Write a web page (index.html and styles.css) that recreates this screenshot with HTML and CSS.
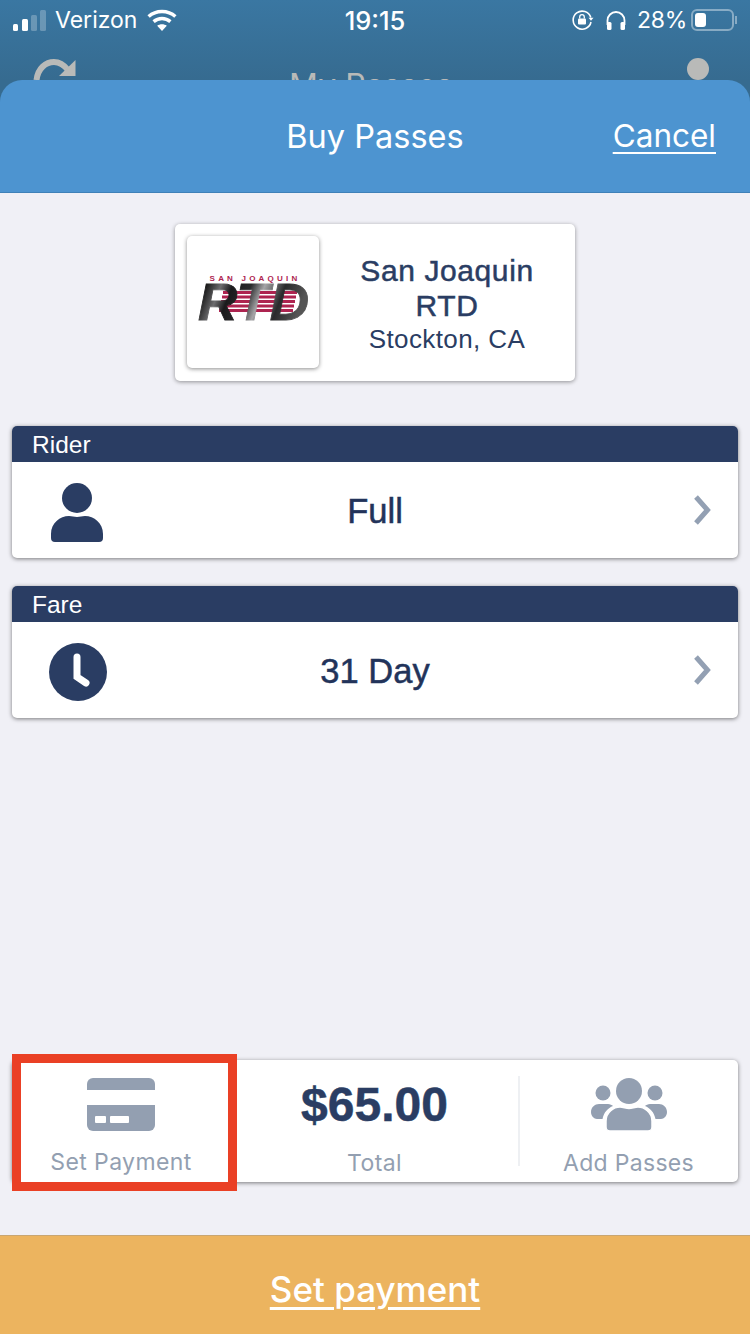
FILE: index.html
```html
<!DOCTYPE html>
<html lang="en">
<head>
  <meta charset="UTF-8">
  <meta name="viewport" content="width=device-width, initial-scale=1.0">
  <title>Buy Passes</title>
  <link rel="stylesheet" href="styles.css">
</head>
<body>
  <div class="backdrop">
    <div class="status-bar">
      <div class="status-left">
        <svg class="signal" width="33" height="21" viewBox="0 0 33 21" fill="#fff">
          <rect x="0" y="14" width="5" height="7" rx="1.5"/>
          <rect x="9" y="9" width="6" height="12" rx="1.5"/>
          <rect x="18" y="5" width="6" height="16" rx="1.5" opacity=".25"/>
          <rect x="27" y="0" width="6" height="21" rx="1.5" opacity=".25"/>
        </svg>
        <span class="carrier">Verizon</span>
        <svg class="wifi" width="30" height="22" viewBox="0 0 30 22" fill="none" stroke="#fff" stroke-width="3.4">
          <path d="M1.6 7.6C9 .8 21 .8 28.4 7.6"/>
          <path d="M6.6 12.6C11.4 8.4 18.6 8.4 23.4 12.6"/>
          <path d="M15 22l-4.8-5.2c2.700-2 6.900-2 9.600 0z" fill="#fff" stroke="none"/>
        </svg>
      </div>
      <span class="clock">19:15</span>
      <div class="status-right">
        <svg width="22" height="20" viewBox="0 0 22 20" fill="none" stroke="#fff" stroke-width="1.6">
          <path d="M18.800 7.500A9 9 0 1 0 19 12"/>
          <path d="M21.500 7.800h-5l2.500 3z" fill="#fff" stroke="none"/>
          <rect x="6" y="8.500" width="8" height="6" rx="1" fill="#fff" stroke="none"/>
          <path d="M7.700 8.500V7a2.300 2.300 0 0 1 4.600 0v1.500" stroke-width="1.300"/>
        </svg>
        <svg class="phones" width="20" height="19" viewBox="0 0 20 19" fill="none" stroke="#fff" stroke-width="1.800">
          <path d="M1.500 14V9.500a8.500 8.500 0 0 1 17 0V14"/>
          <rect x="1" y="11" width="4.500" height="8" rx="1.500" fill="#fff" stroke="none"/>
          <rect x="14.500" y="11" width="4.500" height="8" rx="1.500" fill="#fff" stroke="none"/>
        </svg>
        <span class="percent">28%</span>
        <div class="battery"><div class="battery-fill"></div></div>
        <div class="battery-nub"></div>
      </div>
    </div>
    <div class="behind-nav">
      <svg width="44" height="22" viewBox="0 0 44 22" fill="none">
        <path d="M3.500 22C5 10 13 4 21 4c6 0 10 3 14 8" stroke="#b9bab8" stroke-width="6"/>
        <path d="M42.500 2v16H26z" fill="#b9bab8"/>
      </svg>
      <span class="behind-title">My Passes</span>
      <div class="behind-dot"></div>
    </div>
  </div>

  <div class="sheet">
    <header class="sheet-header">
      <h1>Buy Passes</h1>
      <a class="cancel" href="#">Cancel</a>
    </header>

    <main class="sheet-body">
      <div class="agency">
        <div class="agency-logo">
          <svg width="132" height="132" viewBox="0 0 132 132">
            <defs>
              <linearGradient id="chrome" x1="0" y1="0" x2="1" y2="0.2">
                <stop offset="0" stop-color="#777"/>
                <stop offset=".1" stop-color="#111"/>
                <stop offset=".24" stop-color="#6d6d6f"/>
                <stop offset=".34" stop-color="#1a1a1c"/>
                <stop offset=".5" stop-color="#2a2a2c"/>
                <stop offset=".62" stop-color="#a5a5a7"/>
                <stop offset=".8" stop-color="#2a2a2c"/>
                <stop offset="1" stop-color="#555"/>
              </linearGradient>
            </defs>
            <text class="logo-small" x="68" y="44.500" text-anchor="middle">SAN JOAQUIN</text>
            <g fill="#ad2450">
              <rect x="36" y="55" width="74" height="3"/>
              <rect x="35" y="59.500" width="74" height="3"/>
              <rect x="34" y="64" width="74" height="3"/>
              <rect x="33" y="68.500" width="74" height="3"/>
              <rect x="32" y="73" width="74" height="3"/>
            </g>
            <text class="logo-big" x="11" y="83.500" textLength="111" lengthAdjust="spacingAndGlyphs" fill="url(#chrome)" stroke="url(#chrome)">RTD</text>
          </svg>
        </div>
        <div class="agency-info">
          <div class="agency-name">San Joaquin RTD</div>
          <div class="agency-city">Stockton, CA</div>
        </div>
      </div>

      <section class="picker">
        <div class="picker-label">Rider</div>
        <div class="picker-row">
          <svg class="picker-icon" width="58" height="60" viewBox="0 0 58 60" fill="#2a3d63">
            <circle cx="29" cy="16" r="15"/>
            <path d="M3 56V52C3 41 12 34 21 34c3 0 5 1 8 1s5-1 8-1c9 0 18 7 18 18v4a4 4 0 0 1-4 4H7a4 4 0 0 1-4-4z"/>
          </svg>
          <div class="picker-value">Full</div>
          <svg class="chevron" width="18" height="32" viewBox="0 0 18 32" fill="none">
            <path d="M3 3L14.500 16 3 29" stroke="#93a0b3" stroke-width="5"/>
          </svg>
        </div>
      </section>

      <section class="picker">
        <div class="picker-label">Fare</div>
        <div class="picker-row">
          <svg class="picker-icon picker-icon-clock" width="58" height="58" viewBox="0 0 58 58">
            <circle cx="29" cy="29" r="29" fill="#2a3d63"/>
            <path d="M28 14v20l9 6" fill="none" stroke="#fff" stroke-width="7" stroke-linecap="round"/>
          </svg>
          <div class="picker-value">31 Day</div>
          <svg class="chevron" width="18" height="32" viewBox="0 0 18 32" fill="none">
            <path d="M3 3L14.500 16 3 29" stroke="#93a0b3" stroke-width="5"/>
          </svg>
        </div>
      </section>

      <div class="summary">
        <div class="summary-cell">
          <svg width="68" height="53" viewBox="0 0 68 53" fill="#939fb1">
            <path d="M0 12V6a6 6 0 0 1 6-6h56a6 6 0 0 1 6 6v6z"/>
            <path d="M0 27h68v20a6 6 0 0 1-6 6H6a6 6 0 0 1-6-6z"/>
            <rect x="8" y="38" width="11" height="7" rx="1" fill="#fff"/>
            <rect x="23" y="38" width="19" height="7" rx="1" fill="#fff"/>
          </svg>
          <div class="summary-label">Set Payment</div>
        </div>
        <div class="summary-cell summary-total">
          <div class="total-amount">$65.00</div>
          <div class="summary-label">Total</div>
        </div>
        <div class="summary-cell summary-add">
          <svg width="76" height="53" viewBox="0 0 76 53" fill="#939fb1">
            <circle cx="38" cy="13" r="13"/>
            <circle cx="12" cy="15" r="7.500"/>
            <circle cx="64" cy="15" r="7.500"/>
            <path d="M0 34c0-5 4-8 8-8h9c2 0 4 1 5 2-5 2-9 6-10.500 13H6c-3 0-6-3-6-7z"/>
            <path d="M76 34c0-5-4-8-8-8h-9c-2 0-4 1-5 2 5 2 9 6 10.500 13H70c3 0 6-3 6-7z"/>
            <path d="M15 49V43c0-9 8-14 14-14 3 0 6 1.500 9 1.500s6-1.500 9-1.500c6 0 14 5 14 14v6a4 4 0 0 1-4 4H19a4 4 0 0 1-4-4z" stroke="#fff" stroke-width="1.500"/>
          </svg>
          <div class="summary-label">Add Passes</div>
        </div>
        <div class="highlight"></div>
      </div>
    </main>

    <a class="action" href="#">Set payment</a>
  </div>
</body>
</html>
```

FILE: styles.css
```css
* {
  box-sizing: border-box;
}

html,
body {
  margin: 0;
  height: 1334px;
}

body {
  background-color: #f0f0f6;
  color: #2a3d63;
  font-family: Inter, "Liberation Sans", sans-serif;
  overflow: hidden;
}

/* dimmed page behind the sheet */
.backdrop {
  height: 80px;
  overflow: hidden;
  background: linear-gradient(#3a77a2, #366b90);
  color: #fff;
}

.status-bar {
  position: relative;
  display: flex;
  justify-content: space-between;
  align-items: center;
  height: 40px;
  padding: 0 13px;
}

.status-left,
.status-right {
  display: flex;
  align-items: center;
}

.carrier {
  margin-left: 9px;
  font-size: 23px;
}

.wifi {
  margin-left: 10px;
}

.clock {
  position: absolute;
  left: 0;
  right: 0;
  text-align: center;
  font-size: 25.500px;
  font-weight: 500;
}

.phones {
  margin-left: 12px;
}

.percent {
  margin-left: 11px;
  font-size: 23px;
  letter-spacing: -0.3px;
}

.battery {
  width: 43px;
  height: 22px;
  margin-left: 4px;
  padding: 2px;
  border: 2px solid rgba(255, 255, 255, 0.4);
  border-radius: 6px;
}

.battery-fill {
  width: 11px;
  height: 100%;
  background: #fff;
  border-radius: 3px;
}

.battery-nub {
  width: 2px;
  height: 8px;
  margin-left: 1px;
  background: rgba(255, 255, 255, 0.4);
}

.behind-nav {
  display: grid;
  grid-template-columns: 1fr auto 1fr;
  padding: 18px 41px 0 33px;
}

.behind-title {
  font-size: 32px;
  line-height: 38px;
  margin-top: 9px;
  color: #b9bab8;
}

.behind-dot {
  justify-self: end;
  width: 22px;
  height: 22px;
  border-radius: 50%;
  background: #b9bab8;
}

.sheet {
  height: 1254px;
  display: flex;
  flex-direction: column;
  background: #366b90;
}

.sheet-header {
  position: relative;
  height: 113px;
  display: flex;
  align-items: center;
  justify-content: center;
  background-color: #4d94d0;
  border-bottom: 1px solid #3f81b8;
  border-radius: 22px 22px 0 0;
  color: #fff;
}

.sheet-header h1 {
  margin: 0;
  font-size: 32.500px;
  font-weight: 400;
}

.cancel {
  position: absolute;
  right: 34px;
  top: 36px;
  font-size: 31.500px;
  color: #fff;
  text-decoration-thickness: 2px;
  text-underline-offset: 5px;
}

.sheet-body {
  flex: 1;
  display: flex;
  flex-direction: column;
  padding: 31px 12px 53px;
  background: #f0f0f6;
}

.agency {
  display: flex;
  align-self: center;
  width: 400px;
  height: 157px;
  padding: 12px;
  margin-bottom: 45px;
  background: #fff;
  border-radius: 5px;
  box-shadow: 0 1px 4px rgba(0, 0, 0, 0.4);
}

.agency-logo {
  width: 132px;
  height: 132px;
  background: #fff;
  border-radius: 5px;
  box-shadow: 0 1px 4px rgba(0, 0, 0, 0.45);
}

.logo-small {
  font-family: "Liberation Sans", sans-serif;
  font-size: 8px;
  font-weight: 700;
  letter-spacing: 3.200px;
  fill: #ad2450;
}

.logo-big {
  font-family: "Liberation Sans", sans-serif;
  font-size: 51px;
  font-weight: 700;
  font-style: italic;
  stroke-width: 0.8px;
}

.agency-info {
  flex: 1;
  padding-left: 12px;
  padding-top: 17px;
  text-align: center;
  font-family: "Liberation Sans", sans-serif;
}

.agency-name {
  font-size: 30px;
  line-height: 35px;
  letter-spacing: 0.6px;
  -webkit-text-stroke: 0.5px #2a3d63;
}

.agency-city {
  font-size: 26px;
  line-height: 33px;
  letter-spacing: 0.4px;
}

.picker {
  height: 132px;
  margin-bottom: 28px;
  background: #fff;
  border-radius: 5px;
  overflow: hidden;
  box-shadow: 0 1px 4px rgba(0, 0, 0, 0.5);
}

.picker-label {
  height: 36px;
  padding-left: 20px;
  background: #2a3d63;
  color: #fff;
  font-family: "Liberation Sans", sans-serif;
  font-size: 24.500px;
  line-height: 37px;
}

.picker-row {
  position: relative;
  height: 96px;
  display: flex;
  align-items: center;
  justify-content: center;
}

.picker-icon {
  position: absolute;
  left: 36px;
  top: 20px;
}

.picker-icon-clock {
  left: 37px;
  top: 21px;
}

.picker-value {
  padding-top: 3px;
  font-family: "Liberation Sans", sans-serif;
  font-size: 34.500px;
  color: #22335a;
  -webkit-text-stroke: 0.5px #22335a;
}

.chevron {
  position: absolute;
  right: 27px;
  top: 32px;
}

.summary {
  position: relative;
  display: grid;
  grid-template-columns: 218px 1fr 219px;
  height: 122px;
  margin-top: auto;
  background: #fff;
  border-radius: 5px;
  box-shadow: 0 1px 4px rgba(0, 0, 0, 0.5);
}

.summary-cell {
  display: flex;
  flex-direction: column;
  align-items: center;
  padding-top: 18px;
}

.summary-label {
  margin-top: 17px;
  font-size: 23px;
  line-height: 28px;
  letter-spacing: 0.4px;
  color: #939fb1;
}

.summary-total {
  padding-top: 12px;
}

.total-amount {
  font-family: "Liberation Sans", sans-serif;
  font-size: 48px;
  font-weight: 700;
  line-height: 66px;
  margin-bottom: -6px;
  -webkit-text-stroke: 0.5px #2a3d63;
}

.summary-add {
  position: relative;
}

.summary-add .summary-label {
  margin-top: 18px;
  letter-spacing: 0.3px;
}

.summary-add::before {
  content: "";
  position: absolute;
  left: -1px;
  top: 16px;
  bottom: 16px;
  width: 2px;
  background: #eef0f3;
}

/* red annotation box from the screenshot */
.highlight {
  position: absolute;
  left: 0;
  top: -6px;
  width: 225px;
  height: 137px;
  border: 9px solid #ea4025;
}

.action {
  height: 99px;
  padding-top: 8px;
  display: flex;
  align-items: center;
  justify-content: center;
  background: #ecb45f;
  border-top: 1px solid #c9a672;
  color: #fff;
  font-size: 35px;
  font-weight: 500;
  text-decoration-thickness: 3px;
  text-underline-offset: 5px;
}
```
